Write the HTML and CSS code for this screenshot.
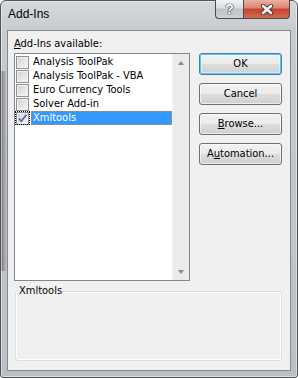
FILE: index.html
```html
<!DOCTYPE html>
<html lang="en">
<head>
<meta charset="UTF-8">
<meta name="viewport" content="width=device-width, initial-scale=1.0">
<title>Add-Ins</title>
<link rel="stylesheet" href="styles.css">
</head>
<body>
<div class="window">
    <div class="titlebar">
        <span class="title">Add-Ins</span>
        <div class="caption">
            <div class="cap help"><span>?</span></div>
            <div class="cap close">
                <svg width="14" height="11" viewBox="0 0 14 11">
                    <path d="M3 2 L11 9 M11 2 L3 9" stroke="#3a3a3a" stroke-width="4.4" stroke-linecap="round" fill="none"/>
                    <path d="M3 2 L11 9 M11 2 L3 9" stroke="#ffffff" stroke-width="2.6" stroke-linecap="round" fill="none"/>
                </svg>
            </div>
        </div>
    </div>
    <div class="client">
        <div class="top">
            <div class="left">
                <div class="label"><u>A</u>dd-Ins available:</div>
                <div class="listbox">
                    <ul class="items">
                        <li class="item"><span class="cbwrap"><span class="check"></span></span><span class="text">Analysis ToolPak</span></li>
                        <li class="item"><span class="cbwrap"><span class="check"></span></span><span class="text">Analysis ToolPak - VBA</span></li>
                        <li class="item"><span class="cbwrap"><span class="check"></span></span><span class="text">Euro Currency Tools</span></li>
                        <li class="item"><span class="cbwrap"><span class="check"></span></span><span class="text">Solver Add-in</span></li>
                        <li class="item selected">
                            <span class="cbwrap focus"><span class="check">
                                <svg width="11" height="11" viewBox="0 0 11 11"><path d="M2 5.5 L4.3 8.3 L9.3 1.8" stroke="#4a62a6" stroke-width="1.6" fill="none"/></svg>
                            </span></span>
                            <span class="text">Xmltools</span>
                        </li>
                    </ul>
                    <div class="scroll">
                        <div class="sbtn"><span class="arrow up"></span></div>
                        <div class="sbtn"><span class="arrow down"></span></div>
                    </div>
                </div>
            </div>
            <div class="buttons">
                <div class="btn default">OK</div>
                <div class="btn">Cancel</div>
                <div class="btn"><span><u>B</u>rowse...</span></div>
                <div class="btn"><span>A<u>u</u>tomation...</span></div>
            </div>
        </div>
        <fieldset class="desc">
            <legend>Xmltools</legend>
        </fieldset>
    </div>
</div>
</body>
</html>
```
FILE: styles.css
```css
* {
    box-sizing: border-box;
}
body {
    margin: 0;
    padding: 0;
    background-color: #ffffff;
}
.window {
    width: 298px;
    height: 378px;
    border: 1px solid #50555b;
    border-radius: 6px 6px 3px 3px;
    background:
        linear-gradient(to right, rgba(70, 70, 70, 0.6) 0, rgba(70, 70, 70, 0) 6px) 0 70px / 100% 200px no-repeat,
        linear-gradient(180deg, #d6d9dc 0, #c7cbcf 30px, #bcc0c5 100%);
    box-shadow: inset 0 0 0 1px rgba(255, 255, 255, 0.45);
    display: flex;
    flex-direction: column;
}
.titlebar {
    height: 29px;
    display: flex;
    justify-content: space-between;
    align-items: flex-start;
    padding: 0 7px 0 7px;
}
.title {
    font-family: "Liberation Sans", Arial, sans-serif;
    font-size: 12px;
    line-height: 14px;
    margin-top: 6px;
    color: #000;
}
.caption {
    display: flex;
    margin-top: -1px;
}
.cap {
    height: 19px;
    border: 1px solid #474b52;
    border-top: none;
    display: flex;
    align-items: center;
    justify-content: center;
}
.help {
    width: 28px;
    border-right: none;
    border-radius: 0 0 0 4px;
    background: linear-gradient(#f1f2f3, #dadcdf 45%, #bfc2c6 50%, #cfd1d4 100%);
}
.help span {
    font-family: "Liberation Sans", Arial, sans-serif;
    font-weight: bold;
    font-size: 14px;
    line-height: 14px;
    color: #fff;
    text-shadow: 0 0 1px #222, 0 0 1px #222, 0 0 1px #222;
}
.close {
    width: 47px;
    border-radius: 0 0 4px 0;
    background: linear-gradient(#eab0a3, #dc8471 45%, #c6412b 50%, #d56a50 100%);
}
.close svg {
    display: block;
}
.client {
    flex: 1;
    margin: 0 6px 6px 6px;
    background-color: #f0f0f0;
    border: 1px solid #858a90;
    padding: 6px 8px 0 6px;
    font-family: "DejaVu Sans Condensed", "DejaVu Sans", sans-serif;
    font-stretch: condensed;
    font-size: 11px;
    color: #000;
}
.top {
    display: flex;
    gap: 9px;
}
.left {
    width: 176px;
}
.label {
    line-height: 14px;
    margin-bottom: 2px;
}
.listbox {
    height: 228px;
    border: 1px solid #828790;
    background-color: #fff;
    display: flex;
}
.items {
    flex: 1;
    list-style: none;
    margin: 0;
    padding: 1px 0 0 0;
}
.item {
    height: 14px;
    display: flex;
    align-items: center;
}
.cbwrap {
    width: 15px;
    height: 14px;
    display: flex;
    align-items: center;
    justify-content: center;
}
.cbwrap.focus {
    outline: 1px dotted #000;
    outline-offset: -1px;
}
.check {
    width: 13px;
    height: 13px;
    border: 1px solid #8e8f8f;
    background: linear-gradient(135deg, #cfd2d6, #f6f6f6);
    box-shadow: inset 0 0 0 1px #f2f2f2;
    display: flex;
    align-items: center;
    justify-content: center;
}
.check svg {
    display: block;
}
.text {
    margin-left: 1px;
    padding: 0 1px;
    height: 14px;
    line-height: 12px;
    border: 1px solid transparent;
    white-space: nowrap;
}
.selected .text {
    flex: 1;
    background-color: #3399ff;
    color: #fff;
    border: 1px dotted #cf8a3c;
}
.scroll {
    width: 17px;
    background-color: #ebebeb;
    border-left: 1px solid #f5f5f5;
    display: flex;
    flex-direction: column;
    justify-content: space-between;
}
.sbtn {
    height: 17px;
    display: flex;
    align-items: center;
    justify-content: center;
}
.arrow {
    width: 1px;
    height: 0;
    border-left: 3px solid transparent;
    border-right: 3px solid transparent;
}
.arrow.up {
    border-bottom: 4px solid #8a8a8a;
}
.arrow.down {
    border-top: 4px solid #8a8a8a;
}
.buttons {
    padding-top: 16px;
    display: flex;
    flex-direction: column;
    gap: 8px;
}
.btn {
    width: 83px;
    height: 22px;
    border: 1px solid #707070;
    border-radius: 3px;
    background: linear-gradient(#f2f2f2 0%, #ebebeb 48%, #dddddd 52%, #cfcfcf 100%);
    box-shadow: inset 0 0 0 1px rgba(255, 255, 255, 0.6);
    display: flex;
    align-items: center;
    justify-content: center;
    line-height: 14px;
}
.btn.default {
    border-color: #3c7fb1;
    box-shadow: inset 0 0 0 1px #48cdfa, inset 0 0 0 2px rgba(255, 255, 255, 0.4);
}
.desc {
    margin: 4px 0 0 1px;
    width: 267px;
    height: 76px;
    border: 1px solid #d5dfe5;
    border-radius: 3px;
    box-shadow: inset 0 0 0 1px #fff;
    padding: 0 2px;
}
.desc legend {
    padding: 0 1px;
    line-height: 12px;
    font-size: 11px;
}
```
